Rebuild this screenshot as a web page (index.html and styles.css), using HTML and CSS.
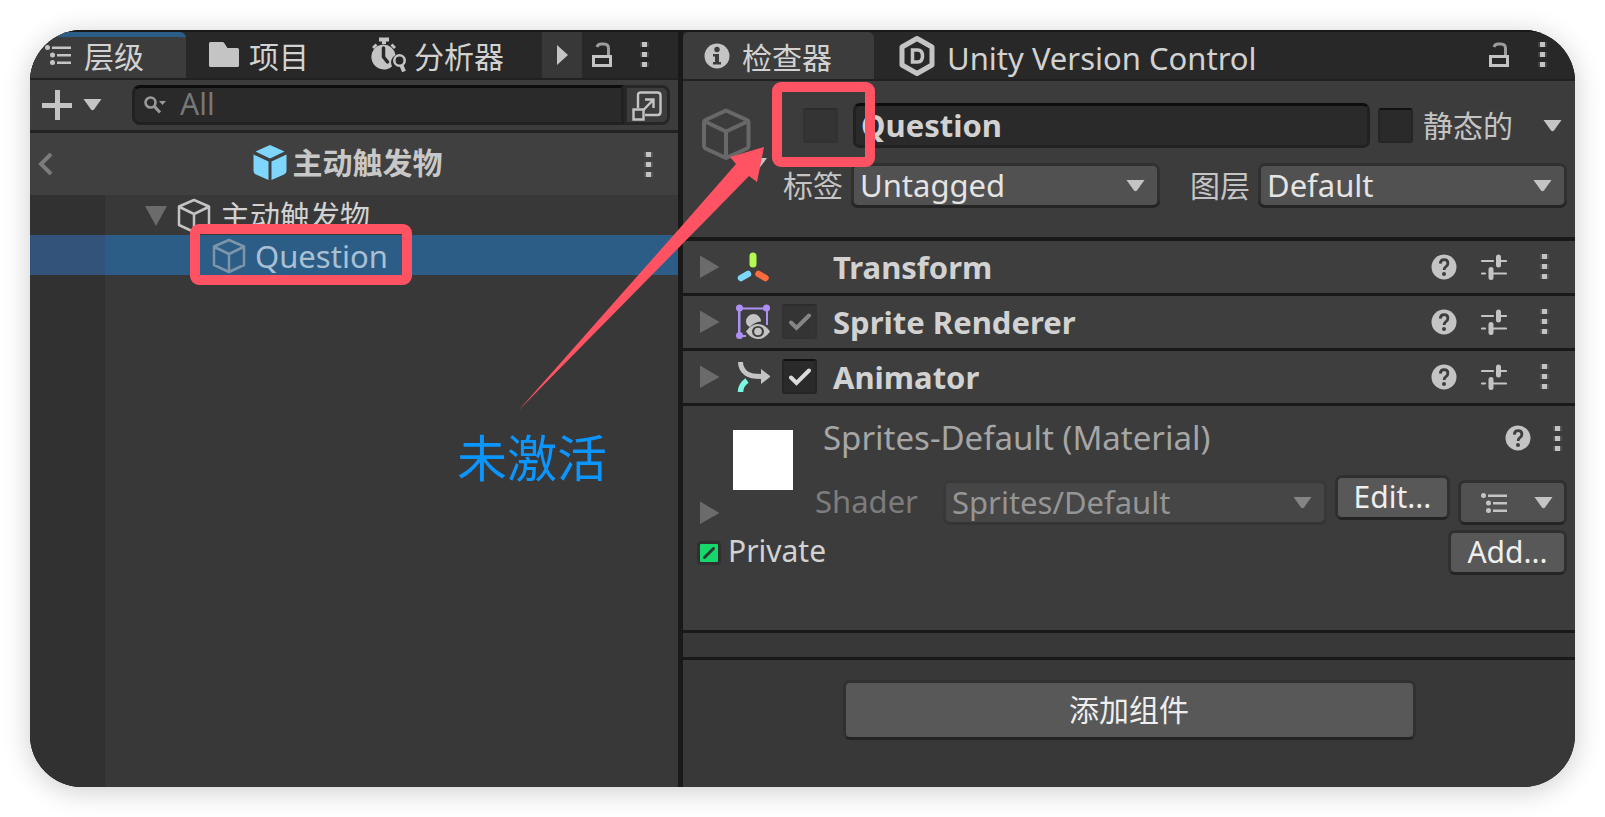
FILE: index.html
```html
<!DOCTYPE html>
<html lang="zh-CN">
<head>
<meta charset="utf-8">
<title>Unity</title>
<link rel="stylesheet" href="styles.css">
</head>
<body>
<svg class="defs" aria-hidden="true">
  <symbol id="kebab" viewBox="0 0 9 25"><path d="M0 0h9v5H0zM0 10h9v5H0zM0 20h9v5H0z" opacity=".18"/><path d="M2 0h5v5H2zM2 10h5v5H2zM2 20h5v5H2z"/></symbol>
  <symbol id="lock" viewBox="0 0 20 25"><path d="M1.500 14.500h17v9h-17z" fill="none" stroke="currentColor" stroke-width="3"/><path d="M16.500 14V6.500q0-4.500-4.500-4.500h-3q-3 0-4 3" fill="none" stroke="currentColor" stroke-width="3" opacity=".75"/></symbol>
  <symbol id="caret" viewBox="0 0 19 12"><path d="M0.500 0h18l-7.500 10.500q-1.500 1.500-3 0z"/></symbol>
  <symbol id="fold" viewBox="0 0 20 24"><path d="M0 0.500l19.500 11.500L0 23z"/></symbol>
  <symbol id="list" viewBox="0 0 26 20"><circle cx="2.500" cy="2.500" r="2.500"/><circle cx="7.500" cy="10" r="2.500"/><circle cx="7.500" cy="17.500" r="2.500"/><path d="M7 1.500h19v2.500H7zM12 9h14v2.500H12zM12 16.500h14v2.500H12z"/></symbol>
  <symbol id="cube" viewBox="0 0 34 36"><path d="M17 2L32 8.500V27L17 34 2 27V8.500zM2.500 9L17 16l14.500-7M17 16v18" fill="none" stroke="currentColor" stroke-width="2.500" stroke-linejoin="round"/></symbol>
  <symbol id="help" viewBox="0 0 26 26"><circle cx="13" cy="13" r="12.500"/><path d="M9.300 9.600Q9.500 5.600 13.100 5.600q3.800 0 3.800 3.600 0 2-2 3.400-1.800 1.200-1.800 3.400" fill="none" stroke="#3e3e3e" stroke-width="2.800"/><circle cx="13" cy="20" r="2" fill="#3e3e3e"/></symbol>
  <symbol id="preset" viewBox="0 0 26 26"><path d="M1 7h11M20 7h5M1 19.500h3M12 19.500h13" fill="none" stroke="currentColor" stroke-width="2.200" stroke-linecap="round"/><path d="M17.500 3v8M10 15.500v8" fill="none" stroke="currentColor" stroke-width="5" stroke-linecap="round"/><path d="M17.500 7h4M8 19.500h4" stroke="currentColor" stroke-width="2"/></symbol>
  <symbol id="tick" viewBox="0 0 22 18"><path d="M2 9.500l5.500 5.500L20 2.500" fill="none" stroke="currentColor" stroke-width="4" stroke-linecap="round"/></symbol>
</svg>

<main class="window">
  <section class="panel hierarchy">
    <nav class="tabs">
      <button class="tab tab-hierarchy active focused"><svg width="26" height="20"><use href="#list"/></svg><span>层级</span></button>
      <button class="tab tab-project"><svg width="30" height="26" viewBox="0 0 30 26"><path d="M1.500 0h12q1 0 1.700 1l3.300 5h10q1.500 0 1.500 1.500v16q0 1.500-1.500 1.500h-27Q0 25 0 23.500v-22Q0 0 1.500 0z"/></svg><span>项目</span></button>
      <button class="tab tab-profiler"><svg width="36" height="36" viewBox="0 0 36 36"><path d="M8 0.500h10v4h-3V7h-4V4.500H8zM1 10l3.500-3.500 2 2L3 12zM19.500 8.500l2-2L25 10l-2 2z"/><path d="M12.500 7.500A12.500 12.500 0 1 0 21 29.500q-3-7 3.500-11.500A12.500 12.500 0 0 0 12.500 7.500z"/><path d="M12.500 11v9l4 5" fill="none" stroke="#282828" stroke-width="3.500" stroke-linecap="round"/><circle cx="28.500" cy="23.500" r="5.200" fill="none" stroke="currentColor" stroke-width="2.600"/><path d="M30.500 28.500l2.500 6" stroke="currentColor" stroke-width="4"/></svg><span>分析器</span></button>
      <button class="more-tabs" aria-label="更多标签页"><svg width="11" height="20" viewBox="0 0 11 20"><path d="M0 0l11 10L0 20z"/></svg></button>
      <button class="icon-btn tab-lock" aria-label="锁定"><svg width="20" height="25"><use href="#lock"/></svg></button>
      <button class="icon-btn tab-menu" aria-label="菜单"><svg width="9" height="25"><use href="#kebab"/></svg></button>
    </nav>
    <div class="toolbar">
      <button class="icon-btn create" aria-label="创建"><svg width="30" height="30" viewBox="0 0 30 30"><path d="M13 0h5v13h12v5H18v12h-5V18H0v-5h13z"/></svg><svg width="19" height="12"><use href="#caret"/></svg></button>
      <label class="search"><svg width="22" height="18" viewBox="0 0 22 18"><circle cx="6.500" cy="6.500" r="5" fill="none" stroke="currentColor" stroke-width="2.600"/><path d="M10 10l6 6.500" stroke="currentColor" stroke-width="3.200"/><path d="M15 5h7l-3.500 4z"/></svg><input type="text" placeholder="All" aria-label="搜索"></label>
      <button class="pick" aria-label="在窗口中搜索"><svg width="30" height="30" viewBox="0 0 30 30"><g fill="none" stroke="currentColor" stroke-width="2.400"><path d="M6 17V4.500Q6 1.500 9 1.500h16.500q3 0 3 3V21q0 3-3 3H13"/><path d="M1.500 18.500h10v10h-10z"/><path d="M11 19.500L21 9M13 8.500h8.500V17"/></g></svg></button>
    </div>
    <header class="prefab-bar">
      <button class="icon-btn back" aria-label="返回"><svg width="15" height="22" viewBox="0 0 15 22"><path d="M13 1L3 11l10 10" fill="none" stroke="currentColor" stroke-width="4"/></svg></button>
      <h1 class="prefab-name"><svg width="34" height="36" viewBox="0 0 34 36"><path d="M17 0l14.500 6.500L17 13.500 2.500 6.500zM.5 9.500L15.500 16.500V35L3 29.500Q.5 28.500.5 26zM33.500 9.500L18.500 16.500V35L31 29.500q2.500-1 2.500-3.500z" fill="#7fd6fd"/></svg><span>主动触发物</span></h1>
      <button class="icon-btn" aria-label="菜单"><svg width="9" height="25"><use href="#kebab"/></svg></button>
    </header>
    <ul class="tree">
      <li class="node root"><svg class="dim" width="22" height="20" viewBox="0 0 22 20"><path d="M0 0h22L11 20z"/></svg><svg width="34" height="36"><use href="#cube"/></svg><span>主动触发物</span></li>
      <li class="node child selected"><svg width="34" height="36"><use href="#cube"/></svg><span class="latin">Question</span></li>
      <li class="node rest"></li>
    </ul>
  </section>

  <section class="panel inspector">
    <nav class="tabs">
      <button class="tab tab-inspector active"><svg width="26" height="26" viewBox="0 0 26 26"><circle cx="13" cy="13" r="12.500"/><path d="M9 11h6v8h2v2.500H9V19h2v-5.500H9z" fill="#3c3c3c"/><circle cx="13" cy="6.500" r="2.700" fill="#3c3c3c"/></svg><span>检查器</span></button>
      <button class="tab tab-vcs"><svg width="36" height="40" viewBox="0 0 36 40"><path d="M18 2.500L33 11v18L18 37.500 3 29V11z" fill="none" stroke="currentColor" stroke-width="5" stroke-linejoin="round"/><path d="M13.500 14h5q5 0 5 6t-5 6h-5z" fill="none" stroke="currentColor" stroke-width="3.500"/></svg><span class="latin">Unity Version Control</span></button>
      <button class="icon-btn tab-lock" aria-label="锁定"><svg width="20" height="25"><use href="#lock"/></svg></button>
      <button class="icon-btn tab-menu" aria-label="菜单"><svg width="9" height="25"><use href="#kebab"/></svg></button>
    </nav>

    <div class="object">
      <svg class="object-icon" width="67" height="62" viewBox="0 0 67 62"><path d="M24 2.500L45 12q1.500 1 1.500 2.500V38q0 1.500-1.500 2.500L24 50 3.500 40.500Q2 39.500 2 38V14.500Q2 13 3.500 12zM3 13.500L24 23.500l21.500-10M24 23.500V50" fill="none" stroke="#686868" stroke-width="4" stroke-linejoin="round"/><path d="M47 50h18l-9 12z" fill="#c4c4c4"/></svg>
      <div class="object-fields">
        <div class="field-row name-row">
          <span class="check faded"><input type="checkbox" aria-label="激活"></span>
          <input class="name-input latin" type="text" value="Question" aria-label="名称">
          <label class="static"><span class="check"><input type="checkbox"></span>静态的</label>
          <button class="icon-btn static-menu" aria-label="静态选项"><svg width="19" height="12"><use href="#caret"/></svg></button>
        </div>
        <div class="field-row tag-row">
          <label for="tag">标签</label>
          <span class="dropdown"><select class="latin" id="tag"><option>Untagged</option></select><svg width="19" height="12"><use href="#caret"/></svg></span>
          <label class="layer-label" for="layer">图层</label>
          <span class="dropdown"><select class="latin" id="layer"><option>Default</option></select><svg width="19" height="12"><use href="#caret"/></svg></span>
        </div>
      </div>
    </div>

    <div class="component">
      <svg class="dim" width="20" height="24"><use href="#fold"/></svg>
      <svg class="comp-icon" width="34" height="36" viewBox="0 0 34 36"><path d="M17 7v8" stroke="#b4f852" stroke-width="7" stroke-linecap="round"/><path d="M12 25l-7 4" stroke="#7fd6fd" stroke-width="6.500" stroke-linecap="round"/><path d="M22.500 25l7 4" stroke="#ff6b3d" stroke-width="6.500" stroke-linecap="round"/></svg>
      <span class="check-space"></span>
      <h2 class="latin">Transform</h2>
      <button class="icon-btn" aria-label="帮助"><svg width="26" height="26"><use href="#help"/></svg></button>
      <button class="icon-btn preset" aria-label="预设"><svg width="26" height="26"><use href="#preset"/></svg></button>
      <button class="icon-btn menu" aria-label="菜单"><svg width="9" height="25"><use href="#kebab"/></svg></button>
    </div>
    <div class="component">
      <svg class="dim" width="20" height="24"><use href="#fold"/></svg>
      <svg class="comp-icon" width="34" height="36" viewBox="0 0 34 36"><g fill="#ae8ff5"><path d="M2 3.500h30V21h-2V5.500H4.500V31H10v2H2z"/><circle cx="3.500" cy="4" r="3.500"/><circle cx="30.500" cy="4" r="3.500"/><circle cx="3.500" cy="31.500" r="3.500"/></g><path d="M10 17.500a7.500 7.500 0 0 1 15 0q-7 .5-11 5.500-4-2-4-5.500z"/><path d="M10 27.500q5-7.500 12-7.500t12 7.500Q29 35 22 35t-12-7.500z"/><ellipse cx="22" cy="27.500" rx="6" ry="5.500" fill="#3e3e3e"/><circle cx="22" cy="27.500" r="3.800"/></svg>
      <span class="check faded"><input type="checkbox" checked aria-label="启用 Sprite Renderer"><svg width="22" height="18"><use href="#tick"/></svg></span>
      <h2 class="latin">Sprite Renderer</h2>
      <button class="icon-btn" aria-label="帮助"><svg width="26" height="26"><use href="#help"/></svg></button>
      <button class="icon-btn preset" aria-label="预设"><svg width="26" height="26"><use href="#preset"/></svg></button>
      <button class="icon-btn menu" aria-label="菜单"><svg width="9" height="25"><use href="#kebab"/></svg></button>
    </div>
    <div class="component">
      <svg class="dim" width="20" height="24"><use href="#fold"/></svg>
      <svg class="comp-icon" width="34" height="36" viewBox="0 0 34 36"><path d="M4.500 3q0 7 6 11.500 4 3 15 3" fill="none" stroke="currentColor" stroke-width="5"/><path d="M25 10l9.500 7.500L25 25z"/><path d="M4.500 33q0-7 6.500-11.500" fill="none" stroke="#7df5df" stroke-width="5.500"/></svg>
      <span class="check"><input type="checkbox" checked aria-label="启用 Animator"><svg width="22" height="18"><use href="#tick"/></svg></span>
      <h2 class="latin">Animator</h2>
      <button class="icon-btn" aria-label="帮助"><svg width="26" height="26"><use href="#help"/></svg></button>
      <button class="icon-btn preset" aria-label="预设"><svg width="26" height="26"><use href="#preset"/></svg></button>
      <button class="icon-btn menu" aria-label="菜单"><svg width="9" height="25"><use href="#kebab"/></svg></button>
    </div>

    <div class="material">
      <div class="material-head">
        <svg class="dim material-fold" width="20" height="24"><use href="#fold"/></svg>
        <div class="preview"></div>
        <div class="material-fields">
          <div class="material-title">
            <h3>Sprites-Default (Material)</h3>
            <button class="icon-btn" aria-label="帮助"><svg width="26" height="26"><use href="#help"/></svg></button>
            <button class="icon-btn menu" aria-label="菜单"><svg width="9" height="25"><use href="#kebab"/></svg></button>
          </div>
          <div class="shader-row">
            <label class="latin" for="shader">Shader</label>
            <span class="dropdown disabled"><select class="latin" id="shader" disabled><option>Sprites/Default</option></select><svg width="19" height="12"><use href="#caret"/></svg></span>
            <button class="btn edit">Edit...</button>
            <button class="btn list-btn" aria-label="列表"><svg width="26" height="20"><use href="#list"/></svg><svg width="19" height="12"><use href="#caret"/></svg></button>
          </div>
        </div>
      </div>
      <div class="private-row">
        <svg width="24" height="24" viewBox="0 0 24 24"><rect width="24" height="24" rx="4" fill="#303030"/><rect x="3" y="3" width="18" height="18" rx="1" fill="#16d76c"/><path d="M7.500 16.500l9-9" stroke="#2c3a32" stroke-width="3" stroke-linecap="round"/></svg>
        <span>Private</span>
        <button class="btn add">Add...</button>
      </div>
    </div>
    <div class="strip"></div>
    <footer class="add-area"><button class="btn add-component">添加组件</button></footer>
  </section>

  <svg class="arrow" width="250" height="270" viewBox="0 0 250 270" aria-hidden="true"><path d="M246 0l-34 10 6 7L169 73 0 264 188 73l43-44 8 6z" fill="#ff5263"/></svg>
  <div class="mark mark-node"></div>
  <div class="mark mark-active"></div>
  <p class="note">未激活</p>
</main>
</body>
</html>
```
FILE: styles.css
```css
* { box-sizing: border-box; }

body {
  margin: 0;
  padding: 30px;
  background: #fff;
  color: #d2d2d2;
  font: 30px/40px "Noto Sans", "Noto Sans CJK SC", sans-serif;
}

button, input, select {
  font: inherit;
  color: inherit;
  margin: 0;
  padding: 0;
  border: 0;
  background: none;
  border-radius: 0;
}

h1, h2, h3, p, ul { margin: 0; padding: 0; list-style: none; }

svg { flex: none; display: block; fill: currentColor; color: #c4c4c4; }
.defs { position: absolute; width: 0; height: 0; }
.dim { color: #6b6b6b; }
.latin { font-size: 31px; }

.window {
  position: relative;
  display: flex;
  gap: 5px;
  min-height: calc(100vh - 60px);
  overflow: hidden;
  background: #191919;
  border-radius: 52px;
}

body::before {
  content: "";
  position: absolute;
  inset: 30px;
  border-radius: 52px;
  box-shadow: 0 4px 28px rgba(0, 0, 0, .2);
}

.panel { display: flex; flex-direction: column; min-width: 0; background: #383838; }
.hierarchy { flex: 648 1 0; }
.inspector { flex: 892 1 0; }

/* Tabs */
.tabs {
  display: flex;
  align-items: stretch;
  height: 50px;
  flex: none;
  background: #282828;
  border-top: 2px solid #191919;
  border-bottom: 2px solid #212121;
}
.inspector .tabs { height: 51px; }
.tab { display: flex; align-items: center; white-space: nowrap; }
.tab span { padding-top: 4px; }
.tab.active { background: #3c3c3c; border-radius: 6px 6px 0 0; }
.tab.focused { border-top: 5px solid #2c5d87; padding-bottom: 5px; }
.tab-hierarchy { width: 156px; padding-left: 15px; gap: 13px; }
.tab-project { padding-left: 23px; gap: 10px; width: 185px; }
.tab-profiler { gap: 7px; }
.more-tabs { display: grid; place-items: center; width: 40px; margin: 0 10px 0 auto; background: #383838; }
.icon-btn { display: flex; align-items: center; flex: none; }
.tab-lock, .tab-menu { padding-bottom: 2px; }
.hierarchy .tab-menu { margin: 0 29px 0 28px; }
.tab-inspector { width: 191px; padding-left: 21px; gap: 12px; }
.tab-vcs { padding-left: 25px; gap: 12px; }
.inspector .tab-lock { margin-left: auto; }
.inspector .tab-menu { margin: 0 28px 0 29px; }

/* Hierarchy */
.toolbar {
  display: flex;
  align-items: center;
  height: 53px;
  flex: none;
  padding: 0 8px 0 12px;
  background: #3c3c3c;
  border-bottom: 3px solid #222;
}
.create { gap: 11px; margin-right: 30px; }
.search {
  display: flex;
  align-items: center;
  flex: 1;
  gap: 14px;
  height: 40px;
  min-width: 0;
  padding-left: 9px;
  background: #2a2a2a;
  border: 3px solid #212121;
  border-top-color: #0d0d0d;
  border-radius: 8px 0 0 8px;
}
.search svg { color: #999; }
.search input { flex: 1; min-width: 0; height: 34px; padding-bottom: 2px; }
.search input::placeholder { color: #777; opacity: 1; }
.pick {
  display: grid;
  place-items: center;
  width: 46px;
  height: 40px;
  padding-top: 2px;
  border: 3px solid #262626;
  border-radius: 0 8px 8px 0;
}
.prefab-bar {
  display: flex;
  align-items: center;
  height: 62px;
  flex: none;
  padding: 0 25px 0 8px;
  background: #404040;
}
.back svg { color: #7b7b7b; }
.prefab-name {
  display: flex;
  align-items: center;
  justify-content: center;
  flex: 1;
  gap: 6px;
  padding: 0 2px 2px 0;
  font-size: 30px;
  font-weight: 700;
  color: #c8c8c8;
}
.tree { display: flex; flex-direction: column; flex: 1; }
.node {
  display: flex;
  align-items: center;
  height: 40px;
  padding-top: 2px;
  background: linear-gradient(90deg, #313131 75px, transparent 75px);
}
.root { padding-left: 115px; gap: 10px; }
.child { padding-left: 182px; gap: 9px; }
.root svg + svg { margin-right: -1px; }
.selected { background: linear-gradient(90deg, #34537b 75px, #2c5d87 75px); color: #a9c0d4; }
.selected svg { color: #7d95a9; }
.rest { flex: 1; }

/* Inspector */
.object {
  display: flex;
  gap: 14px;
  height: 160px;
  flex: none;
  padding: 22px 8px 0 19px;
  background: #3c3c3c;
  border-bottom: 4px solid #191919;
}
.object-icon { margin-top: 5px; }
.object-fields { display: flex; flex-direction: column; flex: 1; gap: 15px; min-width: 0; }
.field-row { display: flex; align-items: center; color: #c4c4c4; }
.name-row { padding: 0 5px 0 20px; }
.tag-row { gap: 8px; }
.layer-label { margin-left: 22px; }
.check { display: grid; place-items: center; flex: none; width: 35px; height: 35px; }
.check > * { grid-area: 1 / 1; }
.check input {
  appearance: none;
  width: 35px;
  height: 35px;
  background: #2a2a2a;
  border: 2px solid #252525;
  border-top-color: #111;
  border-radius: 3px;
}
.check svg { color: #dcdcdc; pointer-events: none; z-index: 1; }
.faded input { background: #343434; border-color: #323232; border-top-color: #2c2c2c; }
.faded svg { color: #858585; }
.name-input {
  flex: 1;
  min-width: 0;
  height: 45px;
  margin: 0 8px 0 15px;
  padding: 0 5px 2px;
  font-weight: 700;
  color: #d2d2d2;
  background: #2a2a2a;
  border: 3px solid #212121;
  border-top-color: #0d0d0d;
  border-radius: 7px;
}
.static { display: flex; align-items: center; gap: 10px; }
.static-menu { margin-left: 30px; }
.dropdown { position: relative; display: flex; flex: 1; min-width: 0; }
.dropdown select {
  appearance: none;
  width: 100%;
  height: 45px;
  padding: 0 40px 2px 9px;
  color: #e4e4e4;
  background: #515151;
  box-shadow: inset 0 -3px #242424, inset 0 0 0 3px #303030;
  border-radius: 7px;
  opacity: 1;
}
.dropdown svg { position: absolute; right: 15px; top: 17px; pointer-events: none; }
.dropdown.disabled select {
  color: #959595;
  background: #464646;
  box-shadow: inset 0 -3px #353535, inset 0 0 0 3px #393939;
}
.disabled svg { color: #848484; }

.component {
  display: flex;
  align-items: center;
  height: 55px;
  flex: none;
  padding: 0 26px 1px 17px;
  background: #3e3e3e;
  border-bottom: 3px solid #191919;
}
.comp-icon { margin: 0 12px 0 16px; }
.check-space { width: 35px; }
.component h2 { flex: 1; margin-left: 16px; }
.preset { margin-left: 24px; }
.component .menu { margin-left: 33px; }

.material {
  display: flex;
  flex-direction: column;
  gap: 5px;
  height: 227px;
  flex: none;
  padding: 12px 8px 0 17px;
  background: #3c3c3c;
  border-bottom: 3px solid #191919;
}
.material-head { display: flex; }
.material-fold { align-self: flex-end; }
.preview { width: 60px; height: 60px; margin: 12px 22px 0 13px; background: #fff; }
.material-fields { display: flex; flex-direction: column; flex: 1; gap: 17px; min-width: 0; }
.material-title { display: flex; align-items: center; padding: 0 5px 0 8px; }
.material-title h3 { flex: 1; font-size: 33px; font-weight: 400; color: #a6a6a6; }
.material-title .menu { margin-left: 22px; }
.shader-row { display: flex; align-items: flex-end; gap: 8px; }
.shader-row label { width: 120px; line-height: 42px; padding-bottom: 3px; color: #7c7c7c; }
.btn {
  display: flex;
  align-items: center;
  justify-content: center;
  height: 45px;
  flex: none;
  color: #eee;
  background: #585858;
  border: 3px solid #303030;
  border-bottom-color: #242424;
  border-radius: 7px;
}
.edit { width: 115px; margin-bottom: 5px; padding-bottom: 1px; }
.list-btn { width: 109px; gap: 27px; padding-left: 8px; background: #515151; }
.private-row { display: flex; align-items: center; gap: 7px; margin-left: -3px; }
.private-row span { flex: 1; padding-bottom: 3px; }
.add { width: 119px; padding-bottom: 2px; }
.strip { height: 27px; flex: none; border-bottom: 3px solid #191919; }
.add-area { display: flex; justify-content: center; padding-top: 20px; }
.add-component { width: 573px; height: 60px; }

/* Annotations */
.arrow { position: absolute; left: 488px; top: 117px; }
.mark { position: absolute; border: 10px solid #ff5263; border-radius: 9px; }
.mark-node { left: 160px; top: 194px; width: 222px; height: 61px; }
.mark-active { left: 742px; top: 52px; width: 103px; height: 85px; }
.note { position: absolute; left: 427px; top: 393px; font-size: 50px; line-height: 70px; color: #0a95ff; }
```
